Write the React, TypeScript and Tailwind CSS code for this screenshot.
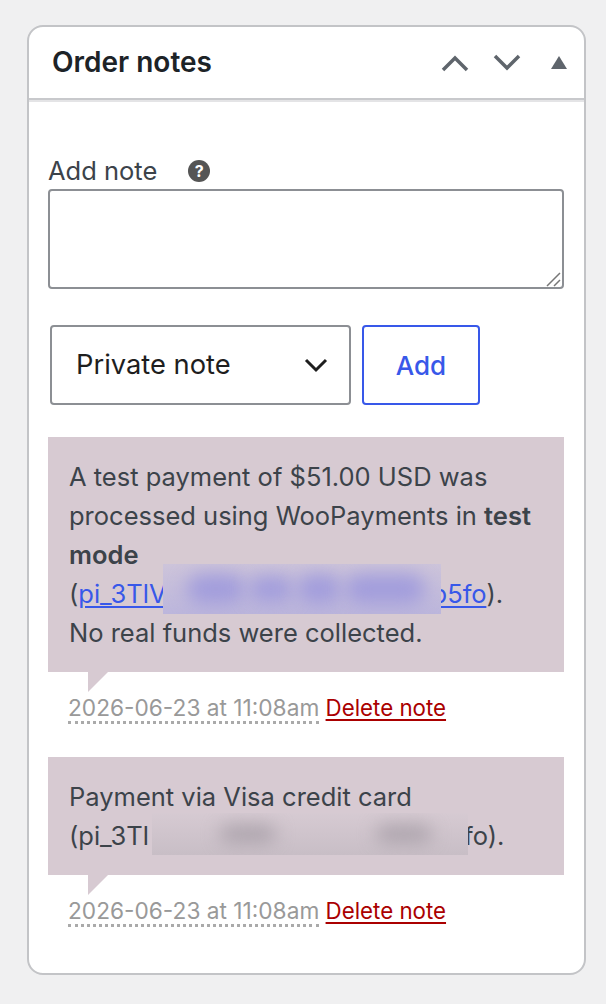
const font = "[font-family:Inter,'Noto_Sans',sans-serif]"

function NoteTail() {
  return <div className="ml-[40px] h-0 w-0 border-t-[20px] border-r-[20px] border-t-[#d7cad2] border-r-transparent" />
}

function NoteMeta() {
  return (
    <p className="mt-[1px] pl-[20px] text-[22.3px] leading-[30px]">
      <span className="border-b-[3px] border-dotted border-[#aaa] text-[22.7px] text-[#999]">2026-06-23 at 11:08am</span>{' '}
      <a href="#" className="text-[#a00] underline underline-offset-[3px]">Delete note</a>
    </p>
  )
}

export default function App() {
  return (
    <div className={`min-h-[1004px] bg-[#f0f0f1] px-[27px] pt-[25px] pb-[29px] ${font}`}>
      <div className="h-[950px] w-[559px] overflow-hidden rounded-[16px] border-2 border-[#c3c4c7] bg-white">
        <div className="flex h-[73px] items-center justify-between border-b-2 border-[#c8c9cc] pl-[23px] pr-[17px] shadow-[0_2px_0_#e4e4e6]">
          <h2 className="pb-[2px] text-[28px] font-semibold text-[#1d2327]">Order notes</h2>
          <div className="flex items-center text-[#5f656c]">
            <svg width="28" height="18" viewBox="0 0 28 18" className="mr-[24px]">
              <path d="M2 16 L14 4 L26 16" fill="none" stroke="currentColor" strokeWidth="3.5" />
            </svg>
            <svg width="28" height="18" viewBox="0 0 28 18" className="mr-[30px]">
              <path d="M2 2 L14 14 L26 2" fill="none" stroke="currentColor" strokeWidth="3.5" />
            </svg>
            <svg width="16" height="14" viewBox="0 0 16 14">
              <path d="M8 0 L16 13 L0 13 Z" fill="currentColor" />
            </svg>
          </div>
        </div>

        <div className="pt-[53px] pl-[19px] pr-[19px]">
          <div className="flex items-center">
            <label className="text-[25.5px] leading-[36px] text-[#3c434a]">Add note</label>
            <span className="ml-[31px] flex h-[22px] w-[22px] items-center justify-center rounded-full bg-[#555] text-[16px] font-bold text-white">?</span>
          </div>
          <div className="relative h-[100px] w-[516px]">
            <textarea className="block h-[100px] w-[516px] resize-none rounded-[4px] border-2 border-[#8c8f94] bg-white" />
            <svg width="16" height="16" viewBox="0 0 16 16" className="absolute right-[2px] bottom-[2px]">
              <path d="M1 15 L14 2 M8 15 L14 9" fill="none" stroke="#777" strokeWidth="1.5" />
            </svg>
          </div>

          <div className="mt-[36px] flex pl-[2px]">
            <div className="flex h-[80px] w-[301px] items-center justify-between rounded-[4px] border-2 border-[#8c8f94] pl-[24px] pr-[21px] text-[27.3px] text-[#1e1e1e]">
              <span className="pt-[1px]">Private note</span>
              <svg width="24" height="16" viewBox="0 0 24 16">
                <path d="M2 3 L12 13 L22 3" fill="none" stroke="#1e1e1e" strokeWidth="3" />
              </svg>
            </div>
            <button className="ml-[11px] h-[80px] w-[118px] rounded-[4px] border-2 border-[#3858e9] text-[26px] font-medium text-[#3858e9]">Add</button>
          </div>

          <div className="mt-[32px]">
            <div className="h-[235px] w-[516px] bg-[#d7cad2] px-[21px] pt-[20px] text-[25.5px] leading-[39px] text-[#3c434a]">
              <p>
                A test payment of $51.00 USD was processed using WooPayments in <strong className="font-semibold">test mode</strong>
                <br />
                (<a href="#" className="text-[#3858e9] underline underline-offset-[3px]">pi_3TlV<span className="relative z-10 -mt-[17px] -mr-[9px] -mb-[3px] -ml-[4px] inline-flex h-[50px] w-[278px] items-center gap-[4px] overflow-hidden bg-[linear-gradient(to_bottom,#cdc4da,#bcb6dc)] pl-[24px] align-middle">
                  <span className="h-[30px] w-[58px] rounded-full bg-[#a29ddc] blur-[9px]" />
                  <span className="h-[26px] w-[44px] rounded-full bg-[#a29ddc] blur-[9px]" />
                  <span className="h-[30px] w-[44px] rounded-full bg-[#a29ddc] blur-[9px]" />
                  <span className="h-[30px] w-[80px] rounded-full bg-[#a29ddc] blur-[9px]" />
                </span>b5fo</a>).
                <br />
                No real funds were collected.
              </p>
            </div>
            <NoteTail />
            <NoteMeta />
          </div>

          <div className="mt-[34px]">
            <div className="h-[118px] w-[516px] bg-[#d7cad2] px-[21px] pt-[20px] text-[25.5px] leading-[39px] text-[#3c434a]">
              <p>
                Payment via Visa credit card
                <br />
                (pi_3Tl<span className="relative z-10 -mt-[6px] -mr-[4px] mb-[2px] ml-[3px] inline-flex h-[42px] w-[316px] items-center gap-[100px] overflow-hidden bg-[linear-gradient(to_bottom,#d6cad2,#c8bec6)] pl-[68px] align-middle">
                  <span className="h-[18px] w-[56px] rounded-full bg-[#aca3ac] blur-[9px]" />
                  <span className="h-[18px] w-[56px] rounded-full bg-[#aca3ac] blur-[9px]" />
                </span>fo).
              </p>
            </div>
            <NoteTail />
            <NoteMeta />
          </div>
        </div>
      </div>
    </div>
  )
}
